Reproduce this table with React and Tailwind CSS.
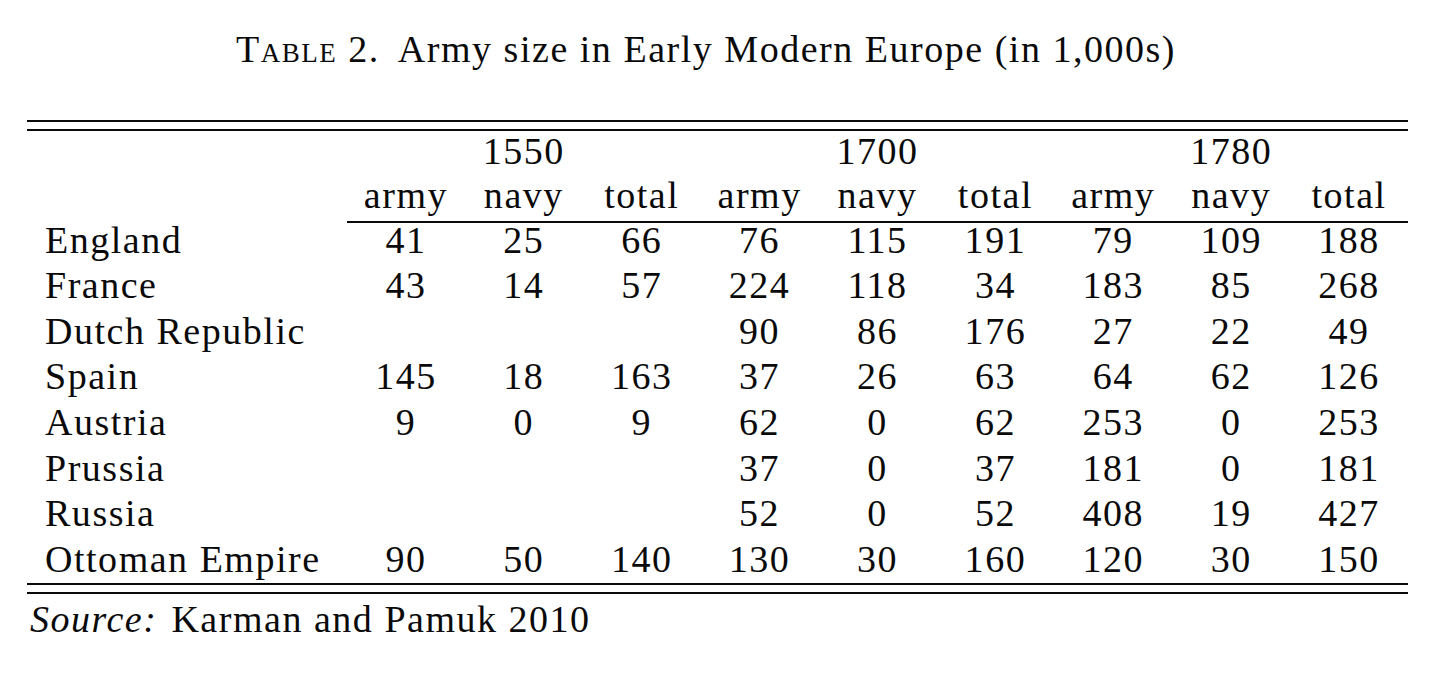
const years = ["1550", "1700", "1780"];
const subs = ["army", "navy", "total"];

const rows = [
  ["England", "41", "25", "66", "76", "115", "191", "79", "109", "188"],
  ["France", "43", "14", "57", "224", "118", "34", "183", "85", "268"],
  ["Dutch Republic", "", "", "", "90", "86", "176", "27", "22", "49"],
  ["Spain", "145", "18", "163", "37", "26", "63", "64", "62", "126"],
  ["Austria", "9", "0", "9", "62", "0", "62", "253", "0", "253"],
  ["Prussia", "", "", "", "37", "0", "37", "181", "0", "181"],
  ["Russia", "", "", "", "52", "0", "52", "408", "19", "427"],
  ["Ottoman Empire", "90", "50", "140", "130", "30", "160", "120", "30", "150"],
];

function Rule({ className = "" }) {
  return <div className={`h-[2px] bg-[#0a0a0a] ${className}`} />;
}

export default function App() {
  return (
    <div className="w-[1456px] h-[684px] bg-white text-[#0a0a0a] text-[38px] tracking-[0.04em] font-['Liberation_Serif',serif] overflow-hidden">
      {/* Caption */}
      <div className="pt-[34px] pr-[44px] text-center leading-[30px]">
        <span className="[font-variant:small-caps]">Table 2.</span>
        <span className="ml-[18px]">Army size in Early Modern Europe (in 1,000s)</span>
      </div>

      <div className="ml-[27px] w-[1381px]">
        <Rule className="mt-[56px]" />
        <Rule className="mt-[7px]" />

        {/* Year header */}
        <div className="pt-[5px] grid grid-cols-[320px_repeat(9,117.9px)] leading-[30px]">
          <div />
          {years.map((y) => (
            <div key={y} className="col-span-3 text-center">
              {y}
            </div>
          ))}
        </div>

        {/* Sub header */}
        <div className="mt-[13.7px] grid grid-cols-[320px_repeat(9,117.9px)] leading-[30px]">
          <div />
          {years.map((y) =>
            subs.map((s) => (
              <div key={y + s} className="pb-[11px] border-b-2 border-[#0a0a0a] text-center">
                {s}
              </div>
            ))
          )}
        </div>

        {/* Body */}
        <div className="grid grid-cols-[320px_repeat(9,117.9px)] gap-y-[4.1px] leading-[30px]">
          {rows.map((r) =>
            r.map((cell, i) => (
              <div
                key={r[0] + i}
                className={`h-[41.5px] pt-[2px] ${i === 0 ? "pl-[18px] whitespace-nowrap" : "text-center"}`}
              >
                {cell}
              </div>
            ))
          )}
        </div>

        <Rule />
        <Rule className="mt-[7px]" />

        <div className="mt-[10px] pl-[3px] leading-[30px]">
          <span className="italic">Source:</span>
          <span className="ml-[14px]">Karman and Pamuk 2010</span>
        </div>
      </div>
    </div>
  );
}
